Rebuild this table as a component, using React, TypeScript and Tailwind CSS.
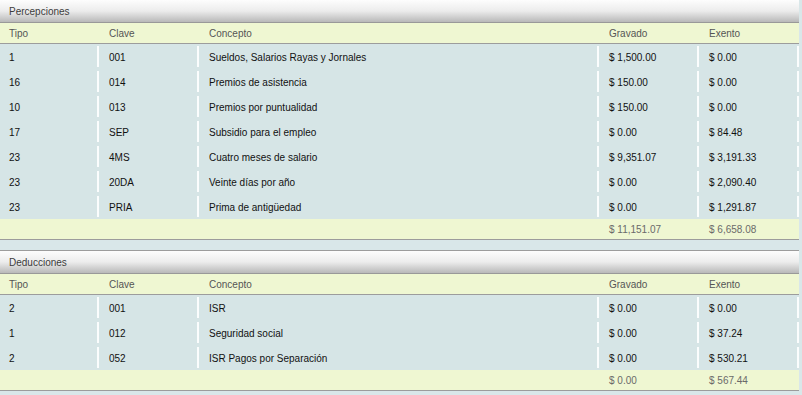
import React from "react";

type Row = { tipo: string; clave: string; concepto: string; gravado: string; exento: string };

const percepciones: Row[] = [
  { tipo: "1", clave: "001", concepto: "Sueldos, Salarios Rayas y Jornales", gravado: "$ 1,500.00", exento: "$ 0.00" },
  { tipo: "16", clave: "014", concepto: "Premios de asistencia", gravado: "$ 150.00", exento: "$ 0.00" },
  { tipo: "10", clave: "013", concepto: "Premios por puntualidad", gravado: "$ 150.00", exento: "$ 0.00" },
  { tipo: "17", clave: "SEP", concepto: "Subsidio para el empleo", gravado: "$ 0.00", exento: "$ 84.48" },
  { tipo: "23", clave: "4MS", concepto: "Cuatro meses de salario", gravado: "$ 9,351.07", exento: "$ 3,191.33" },
  { tipo: "23", clave: "20DA", concepto: "Veinte días por año", gravado: "$ 0.00", exento: "$ 2,090.40" },
  { tipo: "23", clave: "PRIA", concepto: "Prima de antigüedad", gravado: "$ 0.00", exento: "$ 1,291.87" },
];

const deducciones: Row[] = [
  { tipo: "2", clave: "001", concepto: "ISR", gravado: "$ 0.00", exento: "$ 0.00" },
  { tipo: "1", clave: "012", concepto: "Seguridad social", gravado: "$ 0.00", exento: "$ 37.24" },
  { tipo: "2", clave: "052", concepto: "ISR Pagos por Separación", gravado: "$ 0.00", exento: "$ 530.21" },
];

const widths = ["w-[99px] pl-[9px]", "w-[100px] pl-[10px]", "w-[400px] pl-[10px]", "w-[100px] pl-[10px]", "w-[100px] pl-[10px]"];

function Section({ title, rows, totals, first }: { title: string; rows: Row[]; totals: [string, string]; first?: boolean }) {
  return (
    <div className={`w-[799px] border-t border-[#9c9c9c] ${first ? "-mt-px" : "mt-[10px]"}`}>
      <div className="h-[23px] flex items-center pl-[9px] pt-[2px] bg-gradient-to-b from-[#fdfdfd] via-[#ececec] to-[#b9b9b9] border-b border-[#999] text-[#3c3c3c]">
        {title}
      </div>
      <div className="h-[21px] flex items-center pt-[2px] bg-[#eff7d2] border-b border-[#9c9c9c] text-[#555]">
        {["Tipo", "Clave", "Concepto", "Gravado", "Exento"].map((h, i) => (
          <div key={h} className={`${widths[i]} shrink-0`}>{h}</div>
        ))}
      </div>
      {rows.map((r, idx) => (
        <div key={idx} className="h-[25px] flex py-[2px] bg-[#d6e5e6] text-[#111]">
          {[r.tipo, r.clave, r.concepto, r.gravado, r.exento].map((v, i) => (
            <div key={i} className={`${widths[i]} shrink-0 flex items-center pt-[2px] border-r-2 border-[#fbfdfd]`}>
              {v}
            </div>
          ))}
        </div>
      ))}
      <div className="h-[21px] flex items-center pt-[2px] bg-[#eff7d2] border-b border-[#9c9c9c] text-[#6a6a6a]">
        <div className={`${widths[0]} shrink-0`} />
        <div className={`${widths[1]} shrink-0`} />
        <div className={`${widths[2]} shrink-0`} />
        <div className={`${widths[3]} shrink-0`}>{totals[0]}</div>
        <div className={`${widths[4]} shrink-0`}>{totals[1]}</div>
      </div>
    </div>
  );
}

export default function App() {
  return (
    <div
      className="w-[802px] h-[395px] overflow-hidden bg-[#d9e7e9] text-[10px] leading-none"
      style={{ fontFamily: '"Liberation Sans", Arial, sans-serif' }}
    >
      <Section title="Percepciones" rows={percepciones} totals={["$ 11,151.07", "$ 6,658.08"]} first />
      <Section title="Deducciones" rows={deducciones} totals={["$ 0.00", "$ 567.44"]} />
    </div>
  );
}
